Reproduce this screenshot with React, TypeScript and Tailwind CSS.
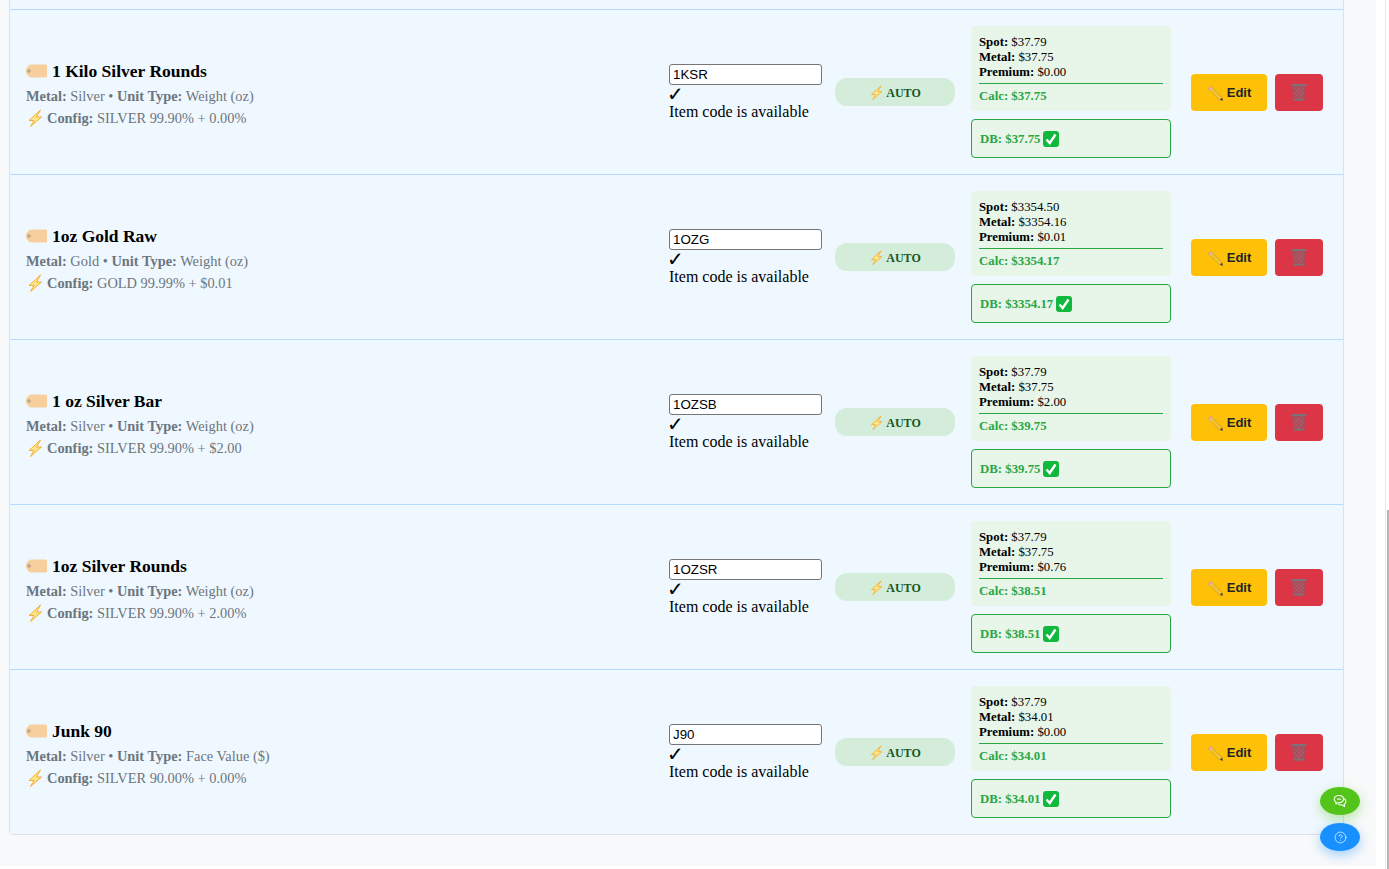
import { CircleHelp } from "lucide-react";

const products = [
  { name: "1 Kilo Silver Rounds", metal: "Silver", unit: "Weight (oz)", config: "SILVER 99.90% + 0.00%", code: "1KSR", spot: "37.79", metalPrice: "37.75", premium: "0.00", calc: "37.75" },
  { name: "1oz Gold Raw", metal: "Gold", unit: "Weight (oz)", config: "GOLD 99.99% + $0.01", code: "1OZG", spot: "3354.50", metalPrice: "3354.16", premium: "0.01", calc: "3354.17" },
  { name: "1 oz Silver Bar", metal: "Silver", unit: "Weight (oz)", config: "SILVER 99.90% + $2.00", code: "1OZSB", spot: "37.79", metalPrice: "37.75", premium: "2.00", calc: "39.75" },
  { name: "1oz Silver Rounds", metal: "Silver", unit: "Weight (oz)", config: "SILVER 99.90% + 2.00%", code: "1OZSR", spot: "37.79", metalPrice: "37.75", premium: "0.76", calc: "38.51" },
  { name: "Junk 90", metal: "Silver", unit: "Face Value ($)", config: "SILVER 90.00% + 0.00%", code: "J90", spot: "37.79", metalPrice: "34.01", premium: "0.00", calc: "34.01" },
];

function TagIcon() {
  return (
    <svg width="21" height="14" viewBox="0 0 21 14" className="shrink-0">
      <path d="M5 .5H19.500a1.500 1.500 0 0 1 1.500 1.500v10a1.500 1.500 0 0 1-1.500 1.500H5Q2.500 13.500 0 8.500v-3Q2.500 .5 5 .5z" fill="#f7cf9d" />
      <circle cx="3" cy="7" r="1.400" fill="#d9b48c" stroke="#a9968c" strokeWidth=".7" />
    </svg>
  );
}

function BoltIcon({ size = 18 }: { size?: number }) {
  return (
    <svg width={size} height={size} viewBox="0 0 18 18" className="shrink-0">
      <path d="M14.500 1 3 11.500h5L4.500 17.500 15.500 8h-5z" fill="#fde68a" stroke="#f5a623" strokeWidth=".9" strokeLinejoin="round" />
    </svg>
  );
}

function CheckBox() {
  return (
    <svg width="16" height="16" viewBox="0 0 16 16" className="shrink-0">
      <rect width="16" height="16" rx="3" fill="#10b93d" />
      <path d="M3.500 8.500 6.700 12 12.500 3.500" fill="none" stroke="#fff" strokeWidth="2.400" />
    </svg>
  );
}

function PencilIcon() {
  return (
    <svg width="16" height="16" viewBox="0 0 16 16" className="shrink-0">
      <path d="M4 1.500 15 12.500l.8 3.300-3.300-.8L1.500 4z" fill="#f4c430" stroke="#a8843a" strokeWidth=".5" />
      <path d="M13 14.600 15 12.800l.8 3z" fill="#3a3a3a" />
      <path d="M1.200 3.800 3.800 1.200l1.700 1.700-2.600 2.600z" fill="#ef9aa6" />
      <path d="M5.300 2.900 2.900 5.300" stroke="#c9c9c9" strokeWidth="1.100" />
    </svg>
  );
}

function TrashIcon() {
  return (
    <svg width="16" height="18" viewBox="0 0 16 18" className="shrink-0">
      <path d="M1 2.500h14L13.500 16.500a1 1 0 0 1-1 1h-9a1 1 0 0 1-1-1z" fill="#a5505e" />
      <path d="M3 5l9 9M6 4l7 7M3 9l6 7M13 5l-9 9M10 4l-7 7M13 9l-6 7" stroke="#b9606e" strokeWidth=".5" />
      <rect x=".5" y="1" width="15" height="2" rx=".8" fill="#7c7278" />
      <rect x="2.500" y="16" width="11" height="1.500" fill="#7c7278" />
    </svg>
  );
}

function ChatIcon() {
  return (
    <svg width="14" height="14" viewBox="0 0 14 14" fill="none" stroke="#fff" strokeWidth="1.100" strokeLinejoin="round">
      <path d="M6 1.500c2.600 0 4.500 1.500 4.500 3.600S8.600 8.700 6 8.700H4.500L3 10V8.300C1.900 7.600 1.200 6.500 1.200 5.100 1.200 3 3.400 1.500 6 1.500z" />
      <path d="M11 4.500c1.200.7 1.900 1.800 1.900 3 0 1.100-.5 2-1.400 2.600V12.500L9.800 11H8c-1.200 0-2.200-.4-2.900-1.200" />
      <path d="M4 5.100h4" />
    </svg>
  );
}

function ProductRow({ p }: { p: (typeof products)[number] }) {
  return (
    <div className="flex h-[165px] items-center border-b border-[#b8daff] bg-[#f0f8ff] pl-4 pr-5 last:border-b-[#dee2e6]">
      <div className="min-w-0 flex-1 pt-1 text-[14.4px] leading-[22px] text-[#6c757d]">
        <div className="mb-[3px] flex items-center gap-[5px] text-[17.5px] font-bold leading-[22px] text-black">
          <TagIcon />
          <span>{p.name}</span>
        </div>
        <div>
          <b>Metal:</b> {p.metal} • <b>Unit Type:</b> {p.unit}
        </div>
        <div className="flex items-center gap-[3px]">
          <BoltIcon />
          <span>
            <b>Config:</b> {p.config}
          </span>
        </div>
      </div>
      <div className="w-[166px] shrink-0 text-[16px] leading-[18px] text-black">
        <input
          readOnly
          value={p.code}
          className="block h-[21px] w-[153px] rounded-[3px] border border-[#767676] bg-white px-[3px] font-['Liberation_Sans',sans-serif] text-[13.333px] text-black"
        />
        <div className="ml-[-2px] font-['DejaVu_Sans',sans-serif] text-[20px] font-bold">✓</div>
        <div>Item code is available</div>
      </div>
      <div className="flex h-[28px] w-[120px] shrink-0 items-center justify-center gap-[2px] rounded-[12px] bg-[#d4edda] pt-px text-[12px] font-bold text-[#155724]">
        <BoltIcon size={15} />
        AUTO
      </div>
      <div className="ml-4 flex w-[200px] shrink-0 flex-col gap-2">
        <div className="h-[85px] rounded-[4px] bg-[#e8f5e9] px-2 pt-[9px] text-[12.8px] leading-[15px] text-black">
          <div>
            <b>Spot:</b> ${p.spot}
          </div>
          <div>
            <b>Metal:</b> ${p.metalPrice}
          </div>
          <div>
            <b>Premium:</b> ${p.premium}
          </div>
          <div className="mt-[3px] border-t border-[#28a745] pt-[5px] font-bold text-[#28a745]">Calc: ${p.calc}</div>
        </div>
        <div className="flex h-[39px] items-center gap-[3px] rounded-[4px] border border-[#28a745] bg-[#e8f5e9] px-2 text-[12.8px] font-bold text-[#28a745]">
          <span className="mt-[2px]">DB: ${p.calc}</span>
          <CheckBox />
        </div>
      </div>
      <div className="ml-5 flex shrink-0 gap-2">
        <div className="flex h-[37px] w-[76px] items-center justify-center gap-[4px] rounded-[4px] bg-[#ffc107] pt-[2px] font-['Liberation_Sans',sans-serif] text-[13px] font-bold text-[#212529]">
          <PencilIcon />
          Edit
        </div>
        <div className="flex h-[37px] w-[48px] items-center justify-center rounded-[4px] bg-[#dc3545]">
          <TrashIcon />
        </div>
      </div>
    </div>
  );
}

export default function App() {
  return (
    <div className="relative h-[869px] overflow-hidden bg-white font-['Liberation_Serif',serif]">
      <div className="h-[866px] w-[1376px] bg-[#f8f9fa] pl-[9px]">
        <div className="w-[1335px] overflow-hidden rounded-b-[4px] border-x border-[#dee2e6]">
          <div className="h-[10px] border-b border-[#b8daff] bg-[#f0f8ff]" />
          {products.map((p) => (
            <ProductRow key={p.code} p={p} />
          ))}
        </div>
      </div>
      {/* floating chat + help */}
      <div className="absolute left-[1320px] top-[787px] flex h-[28px] w-[40px] items-center justify-center rounded-[50%] bg-[#52c41a] shadow-[0_4px_12px_rgba(82,196,26,0.4)]">
        <ChatIcon />
      </div>
      <div className="absolute left-[1320px] top-[823px] flex h-[28px] w-[40px] items-center justify-center rounded-[50%] bg-[#1890ff] text-white shadow-[0_4px_12px_rgba(24,144,255,0.4)]">
        <CircleHelp size={13} strokeWidth={1.300} />
      </div>
      {/* scrollbar */}
      <div className="absolute left-[1385px] top-0 h-full w-px bg-[#e8e8e8]" />
      <div className="absolute left-[1387px] top-[510px] h-[359px] w-[2px] bg-[#b5b5b5]" />
    </div>
  );
}
